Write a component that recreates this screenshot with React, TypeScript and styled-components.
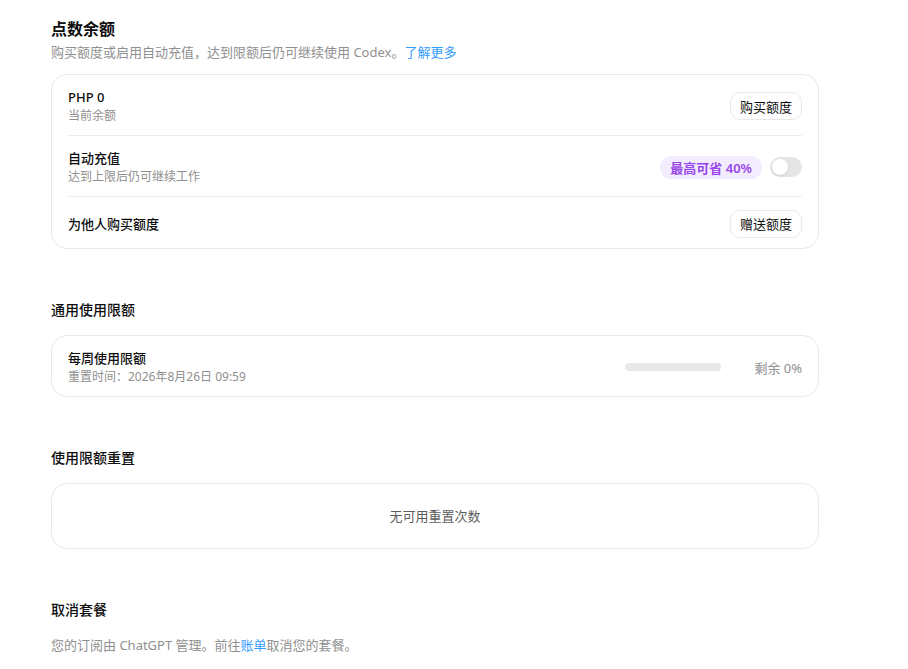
import React, { useState } from "react";
import styled, { createGlobalStyle } from "styled-components";

const GlobalStyle = createGlobalStyle`
  html, body {
    margin: 0;
    padding: 0;
    background: #ffffff;
  }
  body {
    font-family: "Noto Sans", "Noto Sans CJK SC", sans-serif;
    color: #0d0d0d;
    -webkit-font-smoothing: antialiased;
  }
`;

const App: React.FC = () => {
  const [autoTopUp, setAutoTopUp] = useState(false);

  return (
    <>
      <GlobalStyle />
      <Page>
        <Section>
          <PageTitle>点数余额</PageTitle>
          <PageSubtitle>
            购买额度或启用自动充值，达到限额后仍可继续使用 Codex。
            <Link href="#">了解更多</Link>
          </PageSubtitle>
          <Card>
            <Row>
              <RowText>
                <RowTitle>PHP 0</RowTitle>
                <RowSub>当前余额</RowSub>
              </RowText>
              <OutlineButton>购买额度</OutlineButton>
            </Row>
            <Row>
              <RowText>
                <RowTitle>自动充值</RowTitle>
                <RowSub>达到上限后仍可继续工作</RowSub>
              </RowText>
              <RowActions>
                <Badge>最高可省 40%</Badge>
                <Switch
                  $on={autoTopUp}
                  onClick={() => setAutoTopUp((v) => !v)}
                  aria-label="自动充值"
                >
                  <Knob $on={autoTopUp} />
                </Switch>
              </RowActions>
            </Row>
            <Row>
              <RowText>
                <RowTitle>为他人购买额度</RowTitle>
              </RowText>
              <OutlineButton>赠送额度</OutlineButton>
            </Row>
          </Card>
        </Section>

        <Section>
          <SectionTitle>通用使用限额</SectionTitle>
          <Card>
            <Row>
              <RowText>
                <RowTitle>每周使用限额</RowTitle>
                <RowSub>重置时间：2026年8月26日 09:59</RowSub>
              </RowText>
              <RowActions $gap={33}>
                <Track>
                  <Fill style={{ width: "0%" }} />
                </Track>
                <Remaining>剩余 0%</Remaining>
              </RowActions>
            </Row>
          </Card>
        </Section>

        <Section>
          <SectionTitle>使用限额重置</SectionTitle>
          <EmptyCard>无可用重置次数</EmptyCard>
        </Section>

        <Section>
          <SectionTitle>取消套餐</SectionTitle>
          <Note>
            您的订阅由 ChatGPT 管理。前往<Link href="#">账单</Link>取消您的套餐。
          </Note>
        </Section>
      </Page>
    </>
  );
};

const Page = styled.div`
  max-width: 768px;
  padding: 17px 0 40px 51px;
  display: flex;
  flex-direction: column;
  gap: 51px;
`;

const Section = styled.section`
  display: flex;
  flex-direction: column;
`;

const PageTitle = styled.h1`
  margin: 0;
  font-size: 16px;
  line-height: 24px;
  font-weight: 600;
`;

const PageSubtitle = styled.p`
  margin: 1px 0 12px;
  font-size: 13px;
  line-height: 20px;
  color: #8f8f8f;
`;

const SectionTitle = styled.h2`
  margin: 0 0 15px;
  font-size: 14px;
  line-height: 20px;
  font-weight: 500;
`;

const Link = styled.a`
  color: #339cff;
  text-decoration: none;
`;

const Card = styled.div`
  border: 1px solid #e8e8e8;
  border-radius: 16px;
  padding: 0 16px;
`;

const Row = styled.div`
  display: flex;
  align-items: center;
  justify-content: space-between;
  padding: 12px 0 10px;
  min-height: 29px;

  & + & {
    border-top: 1px solid #ececec;
  }
`;

const RowText = styled.div`
  display: flex;
  flex-direction: column;
`;

const RowTitle = styled.div`
  font-size: 13px;
  line-height: 20px;
  font-weight: 500;
`;

const RowSub = styled.div`
  font-size: 12px;
  line-height: 18px;
  color: #8f8f8f;
`;

const RowActions = styled.div<{ $gap?: number }>`
  display: flex;
  align-items: center;
  gap: ${(p) => p.$gap ?? 8}px;
`;

const OutlineButton = styled.button`
  height: 28px;
  padding: 0 9px;
  border: 1px solid #e8e8e8;
  border-radius: 10px;
  background: #ffffff;
  font-family: inherit;
  font-size: 13px;
  color: #0d0d0d;
  cursor: pointer;

  &:hover {
    background: #f7f7f7;
  }
`;

const Badge = styled.span`
  display: inline-flex;
  align-items: center;
  height: 23px;
  padding: 0 10px;
  border-radius: 999px;
  background: #f3ecfe;
  color: #9747e8;
  font-size: 13px;
  font-weight: 600;
`;

const Switch = styled.button<{ $on: boolean }>`
  position: relative;
  width: 32px;
  height: 20px;
  padding: 0;
  border: none;
  border-radius: 999px;
  background: ${(p) => (p.$on ? "#0d0d0d" : "#e5e5e5")};
  cursor: pointer;
`;

const Knob = styled.span<{ $on: boolean }>`
  position: absolute;
  top: 2px;
  left: ${(p) => (p.$on ? 14 : 2)}px;
  width: 16px;
  height: 16px;
  border-radius: 50%;
  background: #ffffff;
  box-shadow: 0 1px 2px rgba(0, 0, 0, 0.12);
  transition: left 0.15s;
`;

const Track = styled.div`
  width: 96px;
  height: 8px;
  border-radius: 999px;
  background: #e8e8e8;
  overflow: hidden;
`;

const Fill = styled.div`
  height: 100%;
  background: #0d0d0d;
`;

const Remaining = styled.span`
  font-size: 13px;
  color: #8f8f8f;
`;

const EmptyCard = styled.div`
  border: 1px solid #e8e8e8;
  border-radius: 16px;
  padding: 22px 16px;
  text-align: center;
  font-size: 13px;
  line-height: 20px;
  color: #5d5d5d;
`;

const Note = styled.p`
  margin: 0;
  font-size: 13px;
  line-height: 20px;
  color: #8f8f8f;
`;

export default App;
